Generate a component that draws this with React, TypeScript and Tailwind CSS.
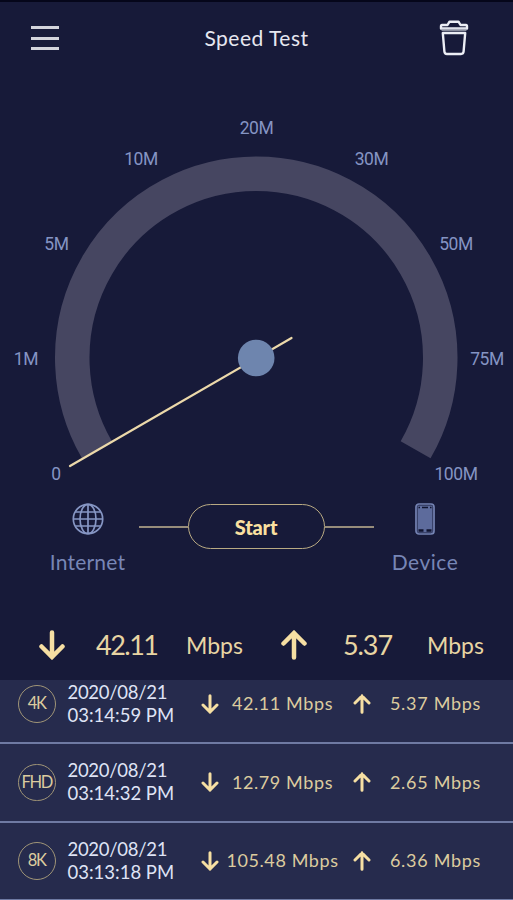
const history = [
  { quality: '4K', date: '2020/08/21', time: '03:14:59 PM', down: '42.11 Mbps', up: '5.37 Mbps' },
  { quality: 'FHD', date: '2020/08/21', time: '03:14:32 PM', down: '12.79 Mbps', up: '2.65 Mbps' },
  { quality: '8K', date: '2020/08/21', time: '03:13:18 PM', down: '105.48 Mbps', up: '6.36 Mbps' },
]

const ticks = [
  { label: '0', x: 56, y: 400 },
  { label: '1M', x: 26, y: 284.5 },
  { label: '5M', x: 56.5, y: 169.5 },
  { label: '10M', x: 141, y: 84.5 },
  { label: '20M', x: 256.5, y: 54 },
  { label: '30M', x: 371.5, y: 84.5 },
  { label: '50M', x: 456, y: 169.5 },
  { label: '75M', x: 487, y: 284.5 },
  { label: '100M', x: 456, y: 400 },
]

function Arrow({ up = false, className = '' }: { up?: boolean; className?: string }) {
  return (
    <svg viewBox="0 0 26 30" fill="none" stroke="#f6dfa3" strokeWidth="4.5" strokeLinecap="round" className={className}>
      <path d={up ? 'M13 27.5V3M2.5 13.5L13 3L23.5 13.5' : 'M13 2.500V27M2.5 16.5L13 27L23.5 16.5'} />
    </svg>
  )
}

function Header() {
  return (
    <header className="flex h-[74px] shrink-0 items-center justify-between border-t-2 border-[#05061a] pr-[44px] pl-[31px]">
      <button className="flex w-[28px] flex-col gap-[7.5px]" aria-label="Menu">
        <span className="h-[3px] w-full bg-[#d3d4dc]" />
        <span className="h-[3px] w-full bg-[#d3d4dc]" />
        <span className="h-[3px] w-full bg-[#d3d4dc]" />
      </button>
      <h1 className="pl-[15px] text-[21px] tracking-[0.5px] text-[#e6e7f0]">Speed Test</h1>
      <button aria-label="Delete history">
        <svg width="30" height="36" viewBox="0 0 30 36" fill="none" stroke="#eceef5" strokeWidth="2.4" strokeLinejoin="round">
          <path d="M3 5H8.500L10.500 1.700H19.500L21.500 5H27Q28 5 28 6.500V8.500H2V6.500Q2 5 3 5Z" />
          <path d="M3.800 13H26.200L24.600 31.500Q24.400 34 22 34H8Q5.600 34 5.400 31.500Z" />
          <path d="M2.500 9.800H27.500" stroke="#a8abb9" strokeWidth="2" />
        </svg>
      </button>
    </header>
  )
}

function Gauge() {
  return (
    <svg width="513" height="424" viewBox="0 0 513 424" className="shrink-0">
      <path d="M96.900 375.750A184 184 0 1 1 415.600 375.750" fill="none" stroke="#464661" strokeWidth="34.500" />
      <path d="M70 392L291.500 264" stroke="#ecd9aa" strokeWidth="2.200" strokeLinecap="round" />
      <circle cx="256.200" cy="284" r="18.300" fill="#6e85ae" />
      {ticks.map((t) => (
        <text
          key={t.label}
          x={t.x}
          y={t.y + 6.2}
          textAnchor="middle"
          className="fill-[#8594c3] font-['Roboto',sans-serif] text-[17.500px] tracking-[-0.400px]"
        >
          {t.label}
        </text>
      ))}
    </svg>
  )
}

function StartBar() {
  return (
    <div className="flex h-[112px] shrink-0 items-start justify-between pr-[54px] pl-[50px] text-[21px] text-[#7786b6]">
      <div className="flex w-[75px] flex-col items-center pt-[5px]">
        <svg width="32" height="32" viewBox="0 0 32 32" fill="none" stroke="#8696c4" strokeWidth="1.700">
          <circle cx="16" cy="16" r="14.700" />
          <ellipse cx="16" cy="16" rx="8" ry="14.700" />
          <path d="M16 1.300V30.700M1.300 16H30.700M3.500 9H28.500M3.500 23H28.500" />
        </svg>
        <span className="mt-[13px] leading-7 tracking-[0.200px]">Internet</span>
      </div>
      <div className="-ml-[4px] flex items-center pt-[6px]">
        <span className="h-[2px] w-[49px] bg-[#978d7b]" />
        <button className="h-[45px] w-[137px] rounded-full border-[1.500px] border-[#b9aa83] text-[20px] font-black tracking-[-0.200px] text-[#fae0a0]">
          Start
        </button>
        <span className="h-[2px] w-[49px] bg-[#978d7b]" />
      </div>
      <div className="flex w-[68px] flex-col items-center pt-[5px]">
        <svg width="20" height="32" viewBox="0 0 20 32" fill="none">
          <rect x="1" y="1" width="18" height="30" rx="3" stroke="#7584b4" strokeWidth="1.700" />
          <path d="M2.500 2.500H17.500V29.500H2.500Z" fill="#5d6b9c" />
          <path d="M3.500 4.500H5M7 4.500H13M15 4.500H16.500" stroke="#10142f" strokeWidth="1.500" />
          <path d="M3.500 27.500H8.500M11.500 27.500H16.500" stroke="#10142f" strokeWidth="2.500" />
        </svg>
        <span className="mt-[13px] leading-7 tracking-[0.500px]">Device</span>
      </div>
    </div>
  )
}

function CurrentResult() {
  return (
    <div className="flex h-[70px] shrink-0 items-center pl-[39px] text-[#e8d5a3]">
      <Arrow className="h-[30px] w-[26px]" />
      <span className="ml-[31px] w-[90px] text-[27px] tracking-[-1.500px]">42.11</span>
      <span className="w-[95px] text-[23px]">Mbps</span>
      <Arrow up className="h-[30px] w-[26px]" />
      <span className="ml-[36px] w-[84px] text-[27px] tracking-[-1.100px]">5.37</span>
      <span className="text-[23px]">Mbps</span>
    </div>
  )
}

function HistoryList() {
  return (
    <div className="-mb-[1px] flex flex-1 flex-col justify-end overflow-hidden bg-[#262b4d]">
      {history.map((item) => (
        <div
          key={item.time}
          className="flex h-[78.500px] shrink-0 items-center border-b-2 border-[#6f7aa3] pl-[18px] text-[18px] text-[#dccb9f]"
        >
          <span className="flex size-[37.500px] items-center justify-center rounded-full border-[1.500px] border-[#a09577] text-[16.500px] tracking-[-1.300px]">
            {item.quality}
          </span>
          <div className="ml-[12px] w-[133px] text-[18.500px] leading-[23px] text-[#dfe3f5]">
            <div className="tracking-[-0.300px]">{item.date}</div>
            <div>{item.time}</div>
          </div>
          <Arrow className="h-[20px] w-[18px]" />
          <span className="w-[128px] text-center tracking-[0.600px] whitespace-nowrap">{item.down}</span>
          <Arrow up className="ml-[6px] h-[20px] w-[18px]" />
          <span className="w-[128px] pl-[2px] text-center tracking-[0.700px] whitespace-nowrap">{item.up}</span>
        </div>
      ))}
    </div>
  )
}

export default function App() {
  return (
    <div className="flex h-[900px] w-[513px] flex-col overflow-hidden bg-[#171a39] font-['Lato',sans-serif]">
      <Header />
      <Gauge />
      <StartBar />
      <CurrentResult />
      <HistoryList />
    </div>
  )
}
